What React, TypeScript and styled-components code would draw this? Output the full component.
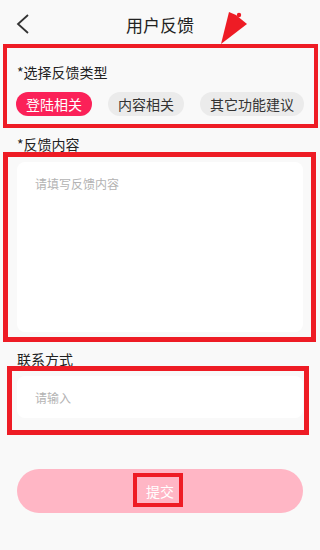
import React, { useState } from 'react';
import styled, { createGlobalStyle } from 'styled-components';

const GlobalStyle = createGlobalStyle`
  html, body {
    margin: 0;
    padding: 0;
    background: #f9f9f9;
  }
  * {
    box-sizing: border-box;
  }
`;

const Page = styled.div`
  position: relative;
  width: 320px;
  height: 550px;
  overflow: hidden;
  background: #f9f9f9;
  font-family: 'Noto Sans CJK SC', 'Noto Sans', sans-serif;
  color: #222;
`;

const Header = styled.header`
  display: grid;
  grid-template-columns: 44px 1fr 44px;
  align-items: center;
  height: 44px;
  padding-top: 4px;
`;

const BackButton = styled.button`
  display: flex;
  align-items: center;
  justify-content: center;
  width: 44px;
  height: 40px;
  padding: 0 0 0 2px;
  border: none;
  background: transparent;
`;

const Title = styled.h1`
  margin: 0;
  text-align: center;
  font-size: 17px;
  font-weight: 400;
  color: #222;
`;

const Section = styled.section<{ $top: number }>`
  display: flex;
  flex-direction: column;
  padding: ${(p) => p.$top}px 17px 0;
`;

const Label = styled.div`
  font-size: 14px;
  line-height: 20px;
  color: #222;
`;

const ChipRow = styled.div`
  display: flex;
  gap: 16px;
  margin-top: 10px;
  margin-left: -1px;
`;

const Chip = styled.button<{ $active: boolean }>`
  flex-shrink: 0;
  height: 24px;
  padding: 0 10px;
  border: none;
  border-radius: 12px;
  font-family: inherit;
  font-size: 14px;
  line-height: 24px;
  white-space: nowrap;
  background: ${(p) => (p.$active ? '#fb2158' : '#ebebeb')};
  color: ${(p) => (p.$active ? '#fff' : '#333')};
`;

const TextArea = styled.textarea`
  margin-top: 8px;
  height: 170px;
  padding: 15px 18px;
  border: none;
  border-radius: 8px;
  background: #fff;
  resize: none;
  font-family: inherit;
  font-size: 12px;
  line-height: 14px;
  outline: none;

  &::placeholder {
    color: #b3b3b3;
  }
`;

const Input = styled.input`
  margin-top: 7px;
  height: 42px;
  padding: 0 18px;
  border: none;
  border-radius: 8px;
  background: #fff;
  font-family: inherit;
  font-size: 12px;
  outline: none;

  &::placeholder {
    color: #b3b3b3;
  }
`;

const SubmitButton = styled.button`
  margin: 51px 17px 0;
  width: calc(100% - 34px);
  height: 44px;
  border: none;
  border-radius: 22px;
  background: #ffb6c5;
  color: #fff;
  font-family: inherit;
  font-size: 14px;
`;

// red annotation boxes drawn over the screenshot
const Mark = styled.div<{ $x: number; $y: number; $w: number; $h: number; $b: number }>`
  position: absolute;
  left: ${(p) => p.$x}px;
  top: ${(p) => p.$y}px;
  width: ${(p) => p.$w}px;
  height: ${(p) => p.$h}px;
  border: ${(p) => p.$b}px solid #ee1c25;
  pointer-events: none;
`;

const Arrow = styled.svg`
  position: absolute;
  left: 0;
  top: 0;
  pointer-events: none;
`;

const types = ['登陆相关', '内容相关', '其它功能建议'];

const App: React.FC = () => {
  const [active, setActive] = useState(0);

  return (
    <Page>
      <GlobalStyle />
      <Header>
        <BackButton aria-label="返回">
          <svg width="14" height="20" viewBox="0 0 14 20">
            <polyline points="12,1 2,10 12,19" fill="none" stroke="#333" strokeWidth="1.8" />
          </svg>
        </BackButton>
        <Title>用户反馈</Title>
        <span />
      </Header>

      <Section $top={18}>
        <Label>*选择反馈类型</Label>
        <ChipRow>
          {types.map((t, i) => (
            <Chip key={t} $active={i === active} onClick={() => setActive(i)}>
              {t}
            </Chip>
          ))}
        </ChipRow>
      </Section>

      <Section $top={18}>
        <Label>*反馈内容</Label>
        <TextArea placeholder="请填写反馈内容" />
      </Section>

      <Section $top={17}>
        <Label>联系方式</Label>
        <Input placeholder="请输入" />
      </Section>

      <SubmitButton>提交</SubmitButton>

      <Mark $x={3} $y={44} $w={315} $h={84} $b={4} />
      <Mark $x={3} $y={152} $w={313} $h={190} $b={5} />
      <Mark $x={7} $y={366} $w={302} $h={69} $b={5} />
      <Mark $x={133} $y={473} $w={50} $h={34} $b={4} />
      <Arrow width="320" height="60" viewBox="0 0 320 60">
        <polygon points="221,44 229,12 236,15 247,24" fill="#ee1c25" />
        <circle cx="239" cy="15" r="2.2" fill="#ee1c25" />
      </Arrow>
    </Page>
  );
};

export default App;
